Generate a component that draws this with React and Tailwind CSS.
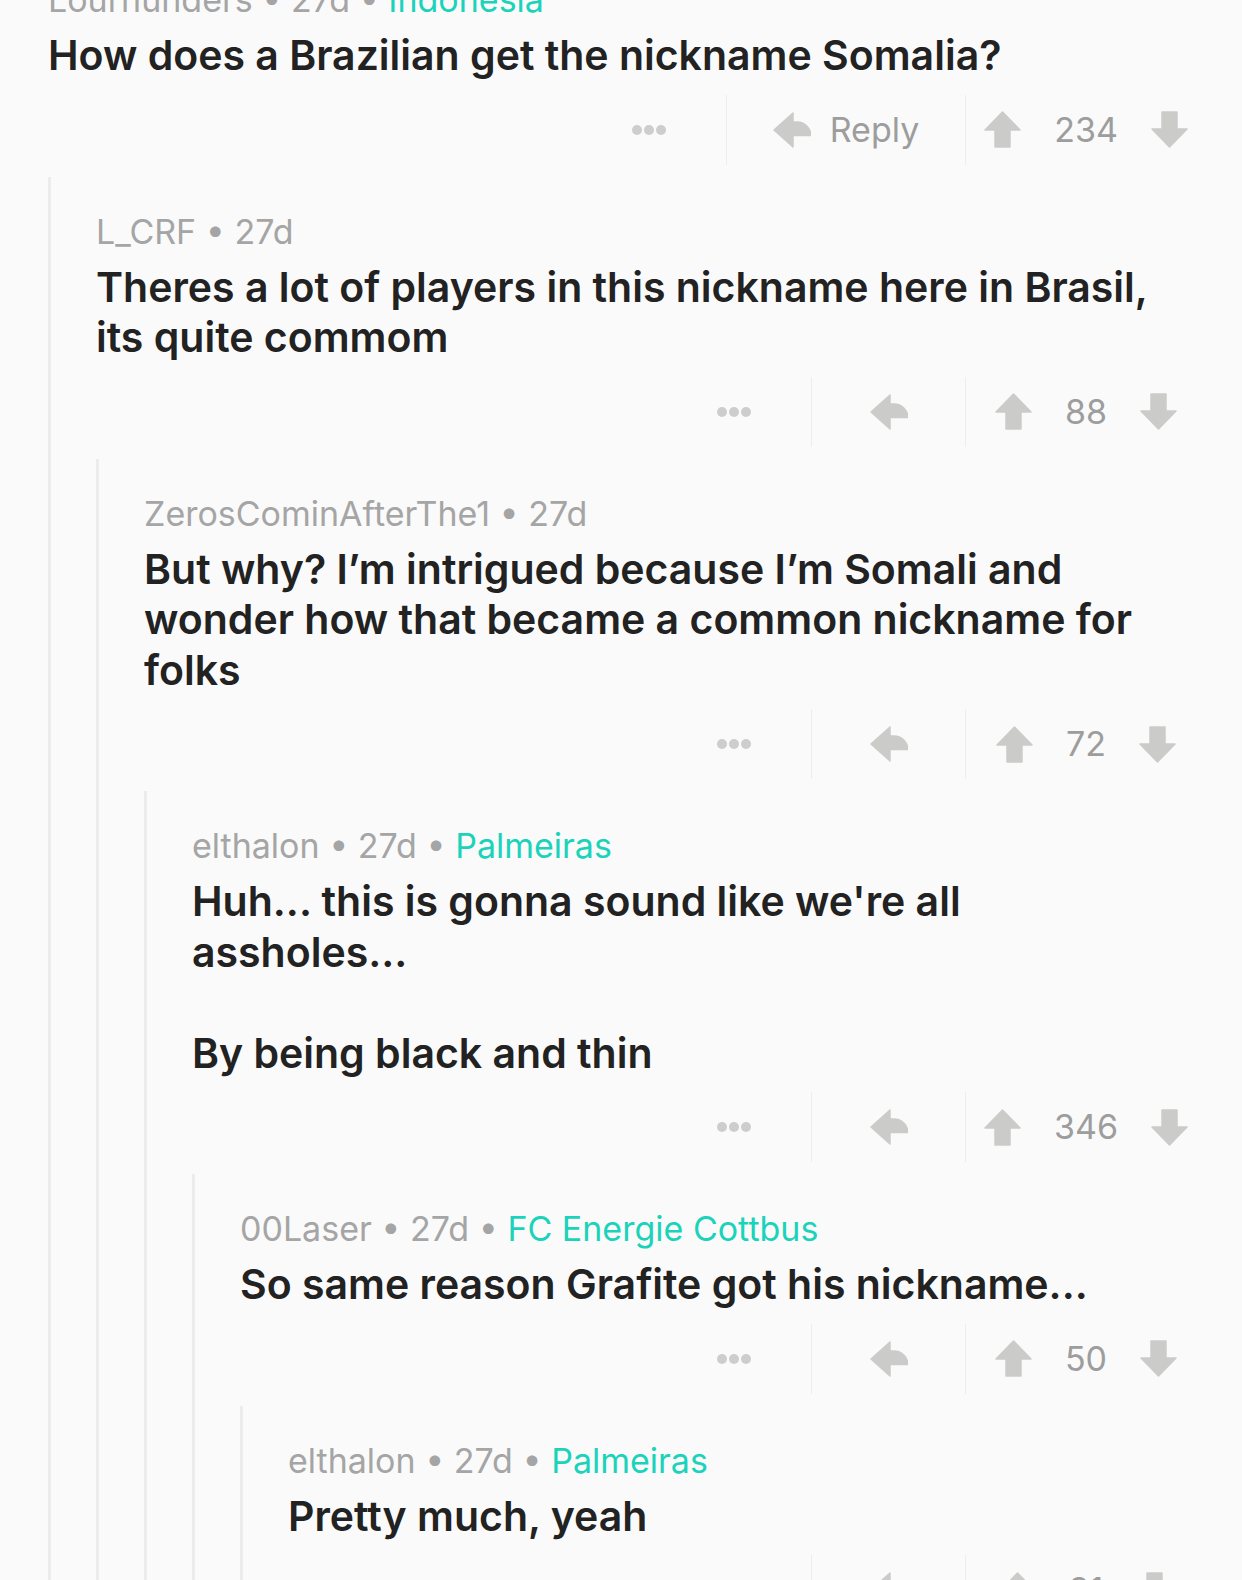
import React from 'react';

const thread = {
    user: 'Lourhunders',
    age: '27d',
    flair: 'Indonesia',
    text: 'How does a Brazilian get the nickname Somalia?',
    score: 234,
    replyLabel: true,
    replies: [{
        user: 'L_CRF',
        age: '27d',
        text: 'Theres a lot of players in this nickname here in Brasil, its quite commom',
        score: 88,
        replies: [{
            user: 'ZerosCominAfterThe1',
            age: '27d',
            text: 'But why? I’m intrigued because I’m Somali and wonder how that became a common nickname for folks',
            score: 72,
            replies: [{
                user: 'elthalon',
                age: '27d',
                flair: 'Palmeiras',
                text: "Huh... this is gonna sound like we're all assholes...\n\nBy being black and thin",
                score: 346,
                replies: [{
                    user: '00Laser',
                    age: '27d',
                    flair: 'FC Energie Cottbus',
                    text: 'So same reason Grafite got his nickname...',
                    score: 50,
                    replies: [{
                        user: 'elthalon',
                        age: '27d',
                        flair: 'Palmeiras',
                        text: 'Pretty much, yeah',
                        score: 31,
                        replies: [],
                    }],
                }],
            }],
        }],
    }],
};

function ReplyIcon() {
    return (
        <svg width="38" height="36" viewBox="0 0 38 36" className="shrink-0">
            <path d="M1 18 L20 1 L20 10 L24 10 A14 14 0 0 1 38 23.5 L20 23.5 L20 35 Z" fill="#cbcbc9" stroke="#cbcbc9" strokeWidth="1.5" strokeLinejoin="round" />
        </svg>
    );
}

function UpIcon() {
    return (
        <svg width="37" height="37" viewBox="0 0 37 37" className="shrink-0">
            <path d="M18.5 1 L36 19 L26 19 L26 36 L11 36 L11 19 L1 19 Z" fill="#cbcbc9" stroke="#cbcbc9" strokeWidth="1.5" strokeLinejoin="round" />
        </svg>
    );
}

function DownIcon() {
    return (
        <svg width="37" height="37" viewBox="0 0 37 37" className="shrink-0">
            <path d="M18.5 36 L36 18 L26 18 L26 1 L11 1 L11 18 L1 18 Z" fill="#cbcbc9" stroke="#cbcbc9" strokeWidth="1.5" strokeLinejoin="round" />
        </svg>
    );
}

function ActionBar({ score, replyLabel }) {
    return (
        <div className="flex justify-end items-center h-[70px] pr-[36px] mt-[14px]">
            {/* more */}
            <div className="w-[154px] flex items-center justify-center gap-[2px]">
                <span className="w-[10px] h-[10px] rounded-full bg-[#cdcdcd]" />
                <span className="w-[10px] h-[10px] rounded-full bg-[#cdcdcd]" />
                <span className="w-[10px] h-[10px] rounded-full bg-[#cdcdcd]" />
            </div>
            <div className="w-px h-full bg-[#ededed]" />
            <div className={`${replyLabel ? 'w-[238px]' : 'w-[153px]'} flex items-center justify-center gap-[19px]`}>
                <ReplyIcon />
                {replyLabel && <span className="text-[34px] text-[#9d9d9d] leading-none">Reply</span>}
            </div>
            <div className="w-px h-full bg-[#ededed]" />
            <div className="w-[240px] flex items-center justify-center gap-[33px]">
                <UpIcon />
                <span className="text-[34px] text-[#9d9d9d] leading-none">{score}</span>
                <DownIcon />
            </div>
        </div>
    );
}

function Comment({ c, root }) {
    return (
        <div className={root ? 'pl-[48px] -mt-[22px]' : 'border-l-[3px] border-[#ececec] pl-[45px] pt-[33px]'}>
            <div className="pr-[56px]">
                <div className="text-[34px] leading-[44px] text-[#a5a5a5] whitespace-nowrap">
                    {c.user} • {c.age}
                    {c.flair && <> • <span className="text-[#1bd3bb]">{c.flair}</span></>}
                </div>
                <div className="mt-[8px] text-[41px] leading-[50.5px] font-semibold text-[#222222] whitespace-pre-line">
                    {c.text}
                </div>
            </div>
            <ActionBar score={c.score} replyLabel={c.replyLabel} />
            {c.replies.length > 0 ? (
                <div className="mt-[12px]">
                    {c.replies.map((r, i) => (
                        <Comment key={i} c={r} />
                    ))}
                </div>
            ) : (
                <div className="h-[120px]" />
            )}
        </div>
    );
}

export default function App() {
    return (
        <div className="w-[1242px] h-[1580px] overflow-hidden bg-[#fafafa] font-['Inter','Roboto',sans-serif]">
            <Comment c={thread} root />
        </div>
    );
}
